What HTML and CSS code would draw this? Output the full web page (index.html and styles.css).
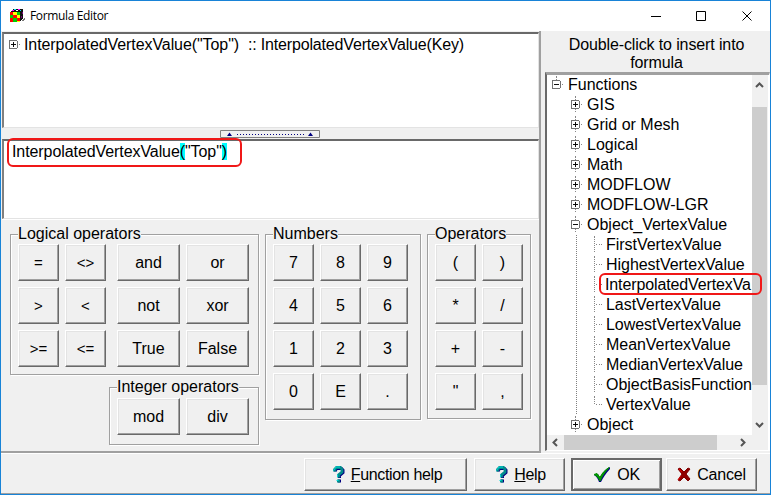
FILE: index.html
```
<!DOCTYPE html>
<html lang="en">
<head>
<meta charset="utf-8">
<title>Formula Editor</title>
<link rel="stylesheet" href="styles.css">
</head>
<body>
<svg class="defs" aria-hidden="true">
  <symbol id="plus" viewBox="0 0 17 20"><path class="dots" d="M4.5 0V20M9 9.5H13"/><path class="box" d="M.5 5.5h8v8h-8z"/><path class="sign" d="M2 9.5h5M4.5 7v5"/></symbol>
  <symbol id="solo" viewBox="0 0 17 20"><path class="dots" d="M9 9.5H13"/><path class="box" d="M.5 5.5h8v8h-8z"/><path class="sign" d="M2 9.5h5M4.5 7v5"/></symbol>
  <symbol id="minus" viewBox="0 0 17 20"><path class="dots" d="M4.5 0V20M9 9.5H13"/><path class="box" d="M.5 5.5h8v8h-8z"/><path class="sign" d="M2 9.5h5"/></symbol>
  <symbol id="root" viewBox="0 0 17 20"><path class="dots" d="M4.5 0V5M9 9.5H13"/><path class="box" d="M.5 5.5h8v8h-8z"/><path class="sign" d="M2 9.5h5"/></symbol>
  <symbol id="leaf" viewBox="0 0 17 20"><path class="dots" d="M4.5 0V20M6 9.5H13"/></symbol>
  <symbol id="last" viewBox="0 0 17 20"><path class="dots" d="M4.5 0V10M6 9.5H13"/></symbol>
  <symbol id="line" viewBox="0 0 17 20"><path class="dots" d="M4.5 0V20"/></symbol>
  <symbol id="help" viewBox="0 0 12 18"><path d="M2.5 5.500V4l1.500-1.500h4.500L10 4v2.500L6.500 9.500V12M5 15h3" fill="none" stroke="#000080" stroke-width="3"/><path d="M1.500 5.500V3.500L3.500 1.500h4L9 3.500V6L5.500 9v2.500M4 15h3" fill="none" stroke="#008b8b" stroke-width="2.800"/><path d="M.5 4.500L3 1H7M4.500 8.500V11M3.500 14.500h2" fill="none" stroke="#00d8d8"/></symbol>
</svg>
<div class="window">
  <header class="titlebar">
    <svg class="app-icon" width="16" height="16" viewBox="0 0 16 16" shape-rendering="crispEdges">
      <path d="M3 1h10v9l-3 4V4H0z" fill="#111"/>
      <path d="M2 2h2v1H2zM8 1h2v1H8z" fill="#f0f"/><path d="M4 1h2v1H4zM10 2h1v1h-1z" fill="#00e5ff"/><path d="M6 2h2v1H6z" fill="#fff"/><path d="M12 4h1v2h-1zM11 8h1v2h-1z" fill="#800080"/>
      <path d="M0 4h10v10H0z" fill="#ff0"/>
      <path d="M0 4h3v3H0zM3 7h4v3H3zM7 10h3v3H7zM0 10h3v4H0z" fill="#f00"/>
      <path d="M7 4h3v3H7zM0 7h3v3H0zM3 10h4v4H3z" fill="#0c0"/>
      <path d="M12 12h1v-1h1v-1h1v2h-1v1h-2z" fill="#777"/>
    </svg>
    <span class="title">Formula Editor</span>
    <svg class="controls" width="108" height="12" viewBox="0 0 108 12" fill="none" stroke="#000"><path d="M0 6.500h10M45.500 1.500h9v9h-9z"/><path d="M91.500 1.500l9 9M100.500 1.500l-9 9"/></svg>
  </header>
  <main class="content">
    <section class="editor">
      <div class="used sunken"><div class="row"><svg class="node"><use href="#solo"/></svg><span class="formula">InterpolatedVertexValue("Top")</span><span class="definition">:: InterpolatedVertexValue(Key)</span></div></div>
      <div class="splitter"><svg width="100" height="8" viewBox="0 0 100 8"><path d="M.5.500h99v7H.5z" fill="#f0f0f0" stroke="#808080"/><path d="M7 6l2.500-3.500L12 6zM88 6l2.500-3.500L93 6z" fill="#000080"/><path d="M17 4.500H84" stroke="#000080" stroke-dasharray="1 2"/></svg></div>
      <div class="input sunken"><span class="formula">InterpolatedVertexValue<mark>(</mark>"Top"<mark>)</mark></span><div class="callout formula-callout"></div></div>
      <div class="keypads">
        <div class="logic-column">
          <fieldset class="group logical"><legend>Logical operators</legend>
            <div class="logic-keys">
              <div class="keys compare">
                <button>=</button><button>&lt;&gt;</button>
                <button>&gt;</button><button>&lt;</button>
                <button>&gt;=</button><button>&lt;=</button>
              </div>
              <div class="keys words">
                <button>and</button><button>or</button>
                <button>not</button><button>xor</button>
                <button>True</button><button>False</button>
              </div>
            </div></fieldset>
          <fieldset class="group integer"><legend>Integer operators</legend><div class="keys words"><button>mod</button><button>div</button></div></fieldset>
        </div>
        <fieldset class="group numbers"><legend>Numbers</legend><div class="keys">
          <button>7</button><button>8</button><button>9</button><button>4</button><button>5</button><button>6</button><button>1</button><button>2</button><button>3</button><button>0</button><button>E</button><button>.</button></div></fieldset>
        <fieldset class="group operators"><legend>Operators</legend><div class="keys">
          <button>(</button><button>)</button><button>*</button><button>/</button><button>+</button><button>-</button><button>"</button><button>,</button></div></fieldset>
      </div>
    </section>
    <aside class="functions">
      <div class="hint">Double-click to insert into formula</div>
      <div class="tree">
        <div class="rows">
          <div class="row"><svg class="node"><use href="#root"/></svg><span>Functions</span></div>
          <div class="row child"><svg class="node"><use href="#plus"/></svg><span>GIS</span></div>
          <div class="row child"><svg class="node"><use href="#plus"/></svg><span>Grid or Mesh</span></div>
          <div class="row child"><svg class="node"><use href="#plus"/></svg><span>Logical</span></div>
          <div class="row child"><svg class="node"><use href="#plus"/></svg><span>Math</span></div>
          <div class="row child"><svg class="node"><use href="#plus"/></svg><span>MODFLOW</span></div>
          <div class="row child"><svg class="node"><use href="#plus"/></svg><span>MODFLOW-LGR</span></div>
          <div class="row child"><svg class="node"><use href="#minus"/></svg><span>Object_VertexValue</span></div>
          <div class="row child leaf"><svg class="guide"><use href="#line"/></svg><svg class="node"><use href="#leaf"/></svg><span>FirstVertexValue</span></div>
          <div class="row child leaf"><svg class="guide"><use href="#line"/></svg><svg class="node"><use href="#leaf"/></svg><span>HighestVertexValue</span></div>
          <div class="row child leaf long"><svg class="guide"><use href="#line"/></svg><svg class="node"><use href="#leaf"/></svg><span>InterpolatedVertexVa</span></div>
          <div class="row child leaf"><svg class="guide"><use href="#line"/></svg><svg class="node"><use href="#leaf"/></svg><span>LastVertexValue</span></div>
          <div class="row child leaf"><svg class="guide"><use href="#line"/></svg><svg class="node"><use href="#leaf"/></svg><span>LowestVertexValue</span></div>
          <div class="row child leaf"><svg class="guide"><use href="#line"/></svg><svg class="node"><use href="#leaf"/></svg><span>MeanVertexValue</span></div>
          <div class="row child leaf"><svg class="guide"><use href="#line"/></svg><svg class="node"><use href="#leaf"/></svg><span>MedianVertexValue</span></div>
          <div class="row child leaf"><svg class="guide"><use href="#line"/></svg><svg class="node"><use href="#leaf"/></svg><span>ObjectBasisFunction</span></div>
          <div class="row child leaf"><svg class="guide"><use href="#line"/></svg><svg class="node"><use href="#last"/></svg><span>VertexValue</span></div>
          <div class="row child"><svg class="node"><use href="#plus"/></svg><span>Object</span></div>
        </div>
        <div class="vscroll"><svg width="9" height="6" viewBox="0 0 9 6"><path d="M1 5l3.500-3.500L8 5"/></svg><div class="vthumb"></div><svg width="9" height="6" viewBox="0 0 9 6"><path d="M1 1l3.500 3.500L8 1"/></svg></div>
        <div class="hscroll"><svg width="6" height="9" viewBox="0 0 6 9"><path d="M5 1L1.500 4.500L5 8"/></svg><div class="hthumb"></div><svg width="6" height="9" viewBox="0 0 6 9"><path d="M1 1l3.500 3.500L1 8"/></svg></div>
        <div class="callout tree-callout"></div>
      </div>
    </aside>
  </main>
  <footer class="actions">
    <button class="wide"><svg width="12" height="18"><use href="#help"/></svg><span><u>F</u>unction help</span></button>
    <button class="help"><svg width="12" height="18"><use href="#help"/></svg><span><u>H</u>elp</span></button>
    <button class="ok"><svg width="18" height="16" viewBox="0 0 18 16"><path d="M1 8l4-1 2 4C9 6 12 3 17 0v2C13 6 10 11 8 15H6C5 12 4 10 1 8z" fill="#000080"/><path d="M1 7.500l3-1 3 4C9 6 12 3 16 .5 12 5 9 9 7 14 5 10 4 9 1 7.500z" fill="#00a000" stroke="#009000"/></svg><span>OK</span></button>
    <button class="cancel"><svg width="14" height="15" viewBox="0 0 14 15"><path d="M3 1l4 4 4-4 2 1-4 5 4 5-2 2-4-4-4 4-2-1 4-6-4-5z" fill="#900000" stroke="#800000"/><path d="M2 2l3 3M1 13l3-4" stroke="#e00000"/></svg><span>Cancel</span></button>
  </footer>
</div>
</body>
</html>
```
FILE: styles.css
```
* { box-sizing: border-box; }
body { margin: 0; background: #f0f0f0; color: #000; font: 16px/20px "Liberation Sans", Arial, sans-serif; }
.defs { position: absolute; width: 0; height: 0; }
.window { display: grid; grid-template-rows: 30px 422px 41px; width: 771px; height: 495px; border: 1px solid #1883d7; background: #f0f0f0; }
.titlebar { display: flex; align-items: center; background: #fff; padding: 0 11px 0 9px; font: 12px/16px "Open Sans", "Noto Sans", sans-serif; }
.title { margin-left: 4px; flex: 1; letter-spacing: -.35px; }
.content { display: grid; grid-template-columns: 540px 4px 225px; min-height: 0; }
.editor { grid-column: 1; display: flex; flex-direction: column; padding: 1px 0 0 1px; border-right: 2px solid #a0a0a0; border-bottom: 2px solid #a0a0a0; }
.sunken { border: solid; border-width: 2px 1px 1px 2px; border-color: #696969 #e3e3e3 #e3e3e3 #808080; background: #fff; }
.used { height: 96px; padding: 1px 0 0 5px; }
.row { display: flex; height: 20px; white-space: pre; }
.node { width: 16px; height: 20px; flex: none; shape-rendering: crispEdges; }
.guide { width: 19px; height: 20px; flex: none; shape-rendering: crispEdges; }
.guide use, .node use { width: 17px; height: 20px; }
.dots { stroke: #808080; stroke-dasharray: 1 1; }
.box { fill: #fff; stroke: #696969; }
.sign { stroke: #000; }
.formula { width: 224px; letter-spacing: -.08px; }
.used .formula { margin-left: -1px; }
.definition { letter-spacing: -.17px; }
.splitter { height: 11px; padding: 2px 0 0 218px; }
.splitter svg { display: block; }
.input { position: relative; height: 80px; padding: 1px 0 0 8px; }
.formula mark { background: #0ff; color: #000; }
.callout { position: absolute; border: 2px solid #f01818; border-radius: 6px; }
.formula-callout { left: 3px; top: -3px; width: 235px; height: 29px; }
.keypads { display: flex; flex: 1; gap: 6px; padding: 4px 0 0 8px; border-top: 1px solid #fff; }
.logic-column { width: 249px; }
.group { min-width: 0; margin: 0; padding: 0 7px; border: 1px solid #a0a0a0; box-shadow: 1px 1px #fff, inset 1px 1px #fff; }
.group legend { padding: 0; height: 20px; background: #f0f0f0; }
.keys { display: grid; grid-auto-rows: 37px; grid-template-columns: repeat(auto-fill, 41px); gap: 6px; }
button { border: 1px solid; border-color: #fff #696969 #696969 #fff; box-shadow: inset -1px -1px #a0a0a0, inset 1px 1px #e3e3e3; background: #f0f0f0; padding: 0; font: inherit; color: #000; }
.logical { height: 151px; }
.logic-keys { display: flex; gap: 11px; }
.compare { width: 88px; font-size: 15px; }
.keys.words { grid-template-columns: 63px 63px; }
.integer { width: 150px; height: 68px; margin: 2px 0 0 99px; }
.integer .keys { padding-top: 1px; }
.numbers { width: 156px; height: 196px; }
.operators { width: 104px; height: 195px; }
.functions { grid-column: 3; display: flex; flex-direction: column; }
.hint { height: 40px; margin-top: 1px; padding: 4px 22px 0 20px; text-align: center; line-height: 18px; letter-spacing: -.12px; }
.tree { position: relative; display: grid; grid-template: 360px 15px / 205px 16px; border: solid; border-width: 3px 1px 1px 2px; border-color: #a0a0a0 #fff #fff #696969; background: #fff; }
.rows { overflow: hidden; padding-left: 5px; }
.child { padding-left: 19px; }
.leaf span { letter-spacing: -.04px; }
.long span { letter-spacing: -.12px; margin-left: -1px; }
.vscroll { display: flex; flex-direction: column; align-items: center; padding: 7px 1px 7px 0; background: #f0f0f0; }
.vscroll path, .hscroll path { fill: none; stroke: #555; stroke-width: 2; }
.vthumb { width: 15px; height: 278px; margin: 19px auto auto 0; background: #cdcdcd; }
.hscroll { grid-column: 1 / 3; display: flex; align-items: center; padding: 0 22px 0 5px; background: #f0f0f0; }
.hthumb { width: 153px; height: 15px; margin: 0 auto 0 6px; background: #cdcdcd; }
.tree-callout { left: 52px; top: 198px; width: 163px; height: 22px; }
.actions { display: flex; align-items: flex-start; padding: 4px 0 0 303px; border-top: 1px solid #fff; border-bottom: 1px solid #a0a0a0; }
.actions button { display: flex; align-items: center; justify-content: center; gap: 6px; height: 33px; width: 91px; letter-spacing: -.2px; }
.actions .wide { width: 163px; margin-right: 7px; padding-left: 4px; letter-spacing: -.35px; }
.actions .help { margin-right: 6px; padding-left: 3px; letter-spacing: -.4px; }
.actions .ok { margin-right: 4px; border: 2px solid #696969; box-shadow: inset 1px 1px #fff, inset -1px -1px #a0a0a0; }
```
